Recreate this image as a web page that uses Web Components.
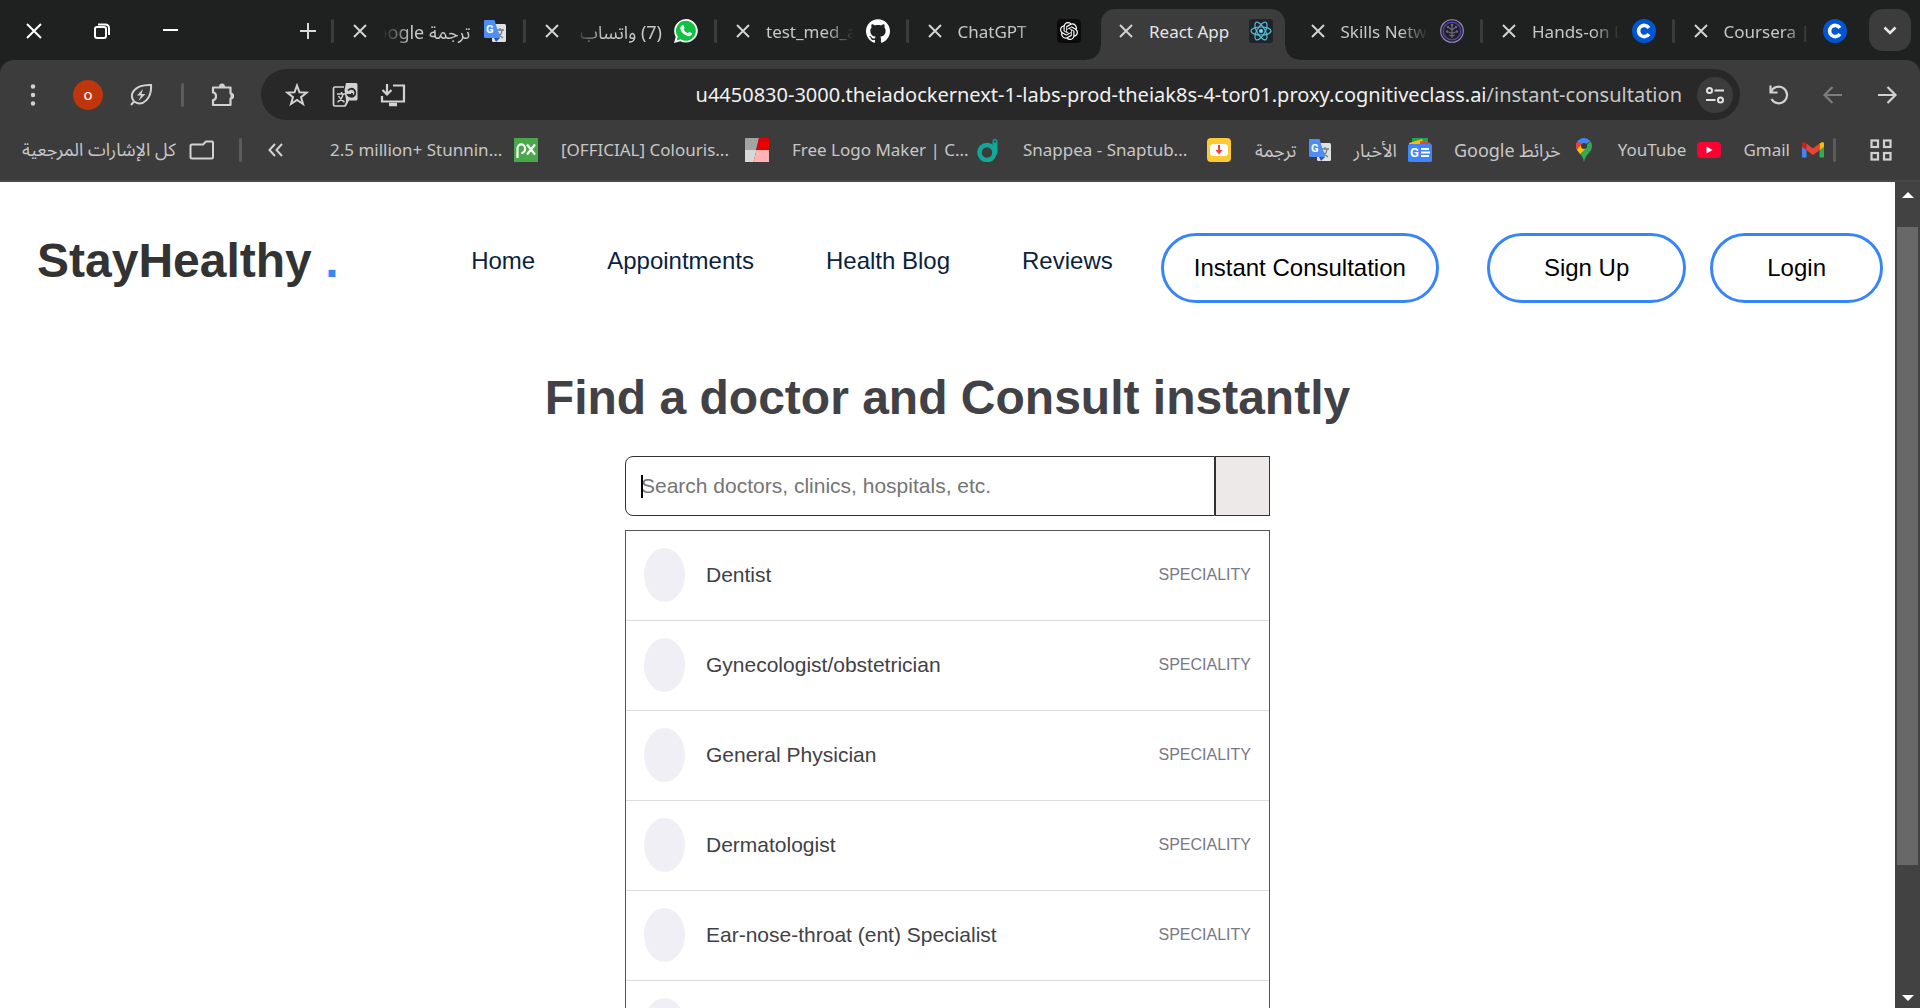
<!DOCTYPE html>
<html lang="en">
<head>
<meta charset="utf-8">
<title>React App</title>
<style>
  html, body { margin: 0; height: 100%; overflow: hidden; }
  body { font-family: "Liberation Sans", Arial, sans-serif; background: #fff; }
</style>
</head>
<body>
<browser-window></browser-window>
<script>
const UI_FONT = '"Noto Sans", "Open Sans", "Noto Sans Arabic", "DejaVu Sans", sans-serif';

const ICONS = {
  close: '<svg viewBox="0 0 20 20" width="20" height="20"><path d="M4 4L16 16M16 4L4 16" stroke="#d2d2d2" stroke-width="2" fill="none"/></svg>',
  winClose: '<svg viewBox="0 0 20 20" width="20" height="20"><path d="M3 3L17 17M17 3L3 17" stroke="#fff" stroke-width="2" fill="none"/></svg>',
  winRestore: '<svg viewBox="0 0 20 20" width="20" height="20" fill="none" stroke="#fff" stroke-width="2"><rect x="3" y="6" width="11" height="11" rx="2"/><path d="M6 3.500h7.500a3.500 3.500 0 0 1 3.500 3.500V14"/></svg>',
  winMin: '<svg viewBox="0 0 20 20" width="20" height="20"><path d="M3 9h15" stroke="#fff" stroke-width="2"/></svg>',
  plus: '<svg viewBox="0 0 20 20" width="20" height="20"><path d="M2 10H18M10 2V18" stroke="#dadada" stroke-width="2"/></svg>',
  chevron: '<svg viewBox="0 0 20 20" width="20" height="20"><path d="M4.500 7.500L10 13L15.500 7.500" stroke="#e6e6e6" stroke-width="2.600" fill="none"/></svg>',
  translate: '<svg viewBox="0 0 24 24" width="24" height="24"><rect x="9" y="5" width="14" height="18" rx="1.500" fill="#dfe1e3"/><path d="M13 11h8M17 9v2M14 19c3-1.500 4.500-4 5-8M14.500 13c1 2.500 3 4.500 5.500 6" stroke="#6d7f86" stroke-width="1.300" fill="none"/><path d="M1.500 1h10L17 19H2.500A1.500 1.500 0 0 1 1 17.500V2z" fill="#4f8ef5"/><path d="M11 19h6l-4 4z" fill="#2f55c5"/><text x="3" y="13.500" font-family="Roboto, sans-serif" font-weight="700" font-size="11" fill="#fff">G</text></svg>',
  whatsapp: '<svg viewBox="0 0 24 24" width="24" height="24"><path d="M12 0a12 11.800 0 1 1-5.700 22.300L0 24l1.700-6.100A12 12 0 0 1 12 0z" fill="#fff"/><path d="M12 1.800a10 10 0 1 1-5.400 18.500L2.700 21.400l1.100-3.800A10 10 0 0 1 12 1.800z" fill="#12c143"/><path d="M8.100 6.200c.6-.4 1.300-.3 1.600.4l.8 1.900c.2.500-.6 1.300-.9 1.700.9 1.900 2.300 3.200 4.300 4 .4-.4 1.100-1.400 1.600-1.200l2 1c.6.300.4 1.500-.1 2.100-1.200 1.400-3 1.300-5 .5-2.800-1.100-5.300-3.800-6-6.300-.4-1.600.4-3.200 1.700-4.100z" fill="#fff"/></svg>',
  github: '<svg viewBox="0 0 24 24" width="24" height="24"><path fill="#fff" d="M12 .297c-6.630 0-12 5.373-12 12 0 5.303 3.438 9.800 8.205 11.385.6.113.820-.258.820-.577 0-.285-.010-1.040-.015-2.040-3.338.724-4.042-1.610-4.042-1.610C4.422 18.070 3.633 17.700 3.633 17.700c-1.087-.744.084-.729.084-.729 1.205.084 1.838 1.236 1.838 1.236 1.070 1.835 2.809 1.305 3.495.998.108-.776.417-1.305.760-1.605-2.665-.3-5.466-1.332-5.466-5.930 0-1.310.465-2.380 1.235-3.220-.135-.303-.540-1.523.105-3.176 0 0 1.005-.322 3.300 1.230.960-.267 1.980-.399 3-.405 1.020.006 2.040.138 3 .405 2.280-1.552 3.285-1.230 3.285-1.230.645 1.653.240 2.873.120 3.176.765.840 1.230 1.910 1.230 3.220 0 4.610-2.805 5.625-5.475 5.920.420.360.810 1.096.810 2.220 0 1.606-.015 2.896-.015 3.286 0 .315.210.690.825.570C20.565 22.092 24 17.592 24 12.297c0-6.627-5.373-12-12-12"/></svg>',
  openai: '<svg viewBox="0 0 24 24" width="24" height="24"><rect width="24" height="24" rx="4" fill="#0b0b0b"/><g transform="translate(3 3) scale(.75)"><path fill="#fff" d="M22.2819 9.8211a5.9847 5.9847 0 0 0-.5157-4.9108 6.0462 6.0462 0 0 0-6.5098-2.9A6.0651 6.0651 0 0 0 4.9807 4.1818a5.9847 5.9847 0 0 0-3.9977 2.9 6.0462 6.0462 0 0 0 .7427 7.0966 5.98 5.98 0 0 0 .511 4.9107 6.051 6.051 0 0 0 6.5146 2.9001A5.9847 5.9847 0 0 0 13.2599 24a6.0557 6.0557 0 0 0 5.7718-4.2058 5.9894 5.9894 0 0 0 3.9977-2.9001 6.0557 6.0557 0 0 0-.7475-7.0729zm-9.022 12.6081a4.4755 4.4755 0 0 1-2.8764-1.0408l.1419-.0804 4.7783-2.7582a.7948.7948 0 0 0 .3927-.6813v-6.7369l2.02 1.1686a.071.071 0 0 1 .038.052v5.5826a4.504 4.504 0 0 1-4.4945 4.4944zm-9.6607-4.1254a4.4708 4.4708 0 0 1-.5346-3.0137l.142.0852 4.783 2.7582a.7712.7712 0 0 0 .7806 0l5.8428-3.3685v2.3324a.0804.0804 0 0 1-.0332.0615L9.74 19.9502a4.4992 4.4992 0 0 1-6.1408-1.6464zM2.3408 7.8956a4.485 4.485 0 0 1 2.3655-1.9728V11.6a.7664.7664 0 0 0 .3879.6765l5.8144 3.3543-2.0201 1.1685a.0757.0757 0 0 1-.071 0l-4.8303-2.7865A4.504 4.504 0 0 1 2.3408 7.872zm16.5963 3.8558L13.1038 8.364 15.1192 7.2a.0757.0757 0 0 1 .071 0l4.8303 2.7913a4.4944 4.4944 0 0 1-.6765 8.1042v-5.6772a.79.79 0 0 0-.407-.667zm2.0107-3.0231l-.142-.0852-4.7735-2.7818a.7759.7759 0 0 0-.7854 0L9.409 9.2297V6.8974a.0662.0662 0 0 1 .0284-.0615l4.8303-2.7866a4.4992 4.4992 0 0 1 6.6802 4.66zM8.3065 12.863l-2.02-1.1638a.0804.0804 0 0 1-.038-.0567V6.0742a4.4992 4.4992 0 0 1 7.3757-3.4537l-.142.0805L8.704 5.459a.7948.7948 0 0 0-.3927.6813zm1.0976-2.3654l2.602-1.4998 2.6069 1.4998v2.9994l-2.5974 1.4997-2.6067-1.4997Z"/></g></svg>',
  react: '<svg viewBox="0 0 24 24" width="24" height="24"><rect width="24" height="24" rx="3" fill="#20232a"/><g fill="none" stroke="#58bfd8" stroke-width="1.200"><ellipse cx="12" cy="12" rx="10" ry="4"/><ellipse cx="12" cy="12" rx="10" ry="4" transform="rotate(60 12 12)"/><ellipse cx="12" cy="12" rx="10" ry="4" transform="rotate(120 12 12)"/></g><circle cx="12" cy="12" r="2" fill="#61dafb"/></svg>',
  skills: '<svg viewBox="0 0 24 24" width="24" height="24" fill="none"><circle cx="12" cy="12" r="11.300" stroke="#9a8ec4" stroke-width="1.100"/><circle cx="12" cy="12" r="8.800" stroke="#5a3fb0" stroke-width="1.500"/><path d="M12 6v13M12 11L8 8M12 11l4-3M12 14.500l-5-2M12 14.500l5-2M12 17l-3-1M12 17l3-1" stroke="#6b6580" stroke-width="1.300"/><g fill="#6b6580"><circle cx="12" cy="6" r="1.300"/><circle cx="8" cy="8" r="1.200"/><circle cx="16" cy="8" r="1.200"/><circle cx="7" cy="12.500" r="1.200"/><circle cx="17" cy="12.500" r="1.200"/></g></svg>',
  coursera: '<svg viewBox="0 0 24 24" width="24" height="24"><circle cx="12" cy="12" r="12" fill="#0056d2"/><path d="M16.900 9A5.600 5.600 0 1 0 16.900 15" fill="none" stroke="#fff" stroke-width="3.600"/></svg>',
  dots: '<svg viewBox="0 0 24 24" width="24" height="24" fill="#d2d2d2"><circle cx="12" cy="3.500" r="2.200"/><circle cx="12" cy="12" r="2.200"/><circle cx="12" cy="20.500" r="2.200"/></svg>',
  leaf: '<svg viewBox="0 0 24 24" width="24" height="24" fill="none" stroke="#d2d2d2" stroke-width="2"><path d="M2 22L5 18.500C0 12 4 1.500 22 2C23 15 14 24.500 5 18.500"/><path d="M14 6L8 12.500H12L9.500 18L16.500 11H12.500z" fill="#d2d2d2" stroke="none"/></svg>',
  puzzle: '<svg viewBox="0 0 26 26" width="26" height="26"><path d="M3 5.500h17.500v6a2.500 2.500 0 0 1 0 5V23H3v-5c4 0 4-7.500 0-7.500z" fill="none" stroke="#d2d2d2" stroke-width="2.200" stroke-linejoin="round"/><path d="M9 5a3 3.400 0 0 1 6 0zM20.500 11a3 3 0 0 1 0 6z" fill="#d2d2d2"/></svg>',
  star: '<svg viewBox="0 0 24 24" width="24" height="24"><path d="M12 2.500L14.500 9.300L21.700 9.600L16 14.100L18 21L12 17L6 21L8 14.100L2.300 9.600L9.500 9.300z" fill="none" stroke="#d2d2d2" stroke-width="2"/></svg>',
  translateBar: '<svg viewBox="0 0 26 26" width="26" height="26"><path d="M12 5H3a1.500 1.500 0 0 0-1.500 1.500v16A1.500 1.500 0 0 0 3 24h10l2-4" fill="none" stroke="#d2d2d2" stroke-width="1.700"/><path d="M5 12h9M9.500 10v2M5.500 20c3.500-2 5-4.500 5.500-8M6.500 14c1.500 3 3.500 4.500 6 6" fill="none" stroke="#d2d2d2" stroke-width="1.500"/><path d="M14 1h10a1.500 1.500 0 0 1 1.500 1.500V17A1.500 1.500 0 0 1 24 18.500h-7L14 24v-5.500L12.500 8z" fill="#d2d2d2"/><path d="M16 8.500a4 4 0 1 1 0 4.500h4v-2" fill="none" stroke="#282828" stroke-width="1.800"/></svg>',
  install: '<svg viewBox="0 0 26 26" width="26" height="26" fill="none" stroke="#d2d2d2" stroke-width="2.200"><path d="M13 3.500h11v16H2V14"/><path d="M7 2v10M2.500 8L7 12.500L11.500 8"/><path d="M9 22.500h8" stroke-width="3.500"/></svg>',
  tune: '<svg viewBox="0 0 20 20" width="20" height="20" fill="none" stroke="#e3e3e3" stroke-width="2"><circle cx="4.500" cy="5.500" r="2.500"/><path d="M9.500 5.500H19M1 15h9.500"/><circle cx="15.500" cy="15" r="2.500"/></svg>',
  reload: '<svg viewBox="0 0 24 24" width="24" height="24" fill="none" stroke="#d2d2d2" stroke-width="2.200"><path d="M4 9A8.300 8.300 0 1 1 4.500 16"/><path d="M3.500 2.500V9.500H10.500"/></svg>',
  arrow: '<svg viewBox="0 0 24 24" width="24" height="24" fill="none" stroke="currentColor" stroke-width="2.200"><path d="M3 12H20M12.500 4L20.500 12L12.500 20"/></svg>',
  folder: '<svg viewBox="0 0 26 22" width="26" height="22"><path d="M3 5.500h11l3-3h6a1 1 0 0 1 1 1V18a1.500 1.500 0 0 1-1.500 1.500H3A1.500 1.500 0 0 1 1.500 18V7A1.500 1.500 0 0 1 3 5.500z" fill="none" stroke="#d2d2d2" stroke-width="2"/></svg>',
  more: '<svg viewBox="0 0 20 20" width="20" height="20"><path d="M9 4L3.500 10L9 16M16 4L10.500 10L16 16" fill="none" stroke="#d2d2d2" stroke-width="2"/></svg>',
  px: '<svg viewBox="0 0 24 24" width="24" height="24"><rect width="24" height="24" fill="#49a849"/><g fill="none" stroke="#fff" stroke-width="2.200"><path d="M3.500 20V10.500a3.800 4.300 0 1 1 3.800 4.500"/><path d="M13 6.500L21 16.500M21 6.500L13 16.500"/></g></svg>',
  colour: '<svg viewBox="0 0 24 24" width="24" height="24"><path d="M0 0h14l-3 12H0z" fill="#a3a3a3"/><path d="M14 0h10v12H11.500z" fill="#e60000"/><path d="M0 12h11.500L8.500 24H0z" fill="#d8d8d8"/><path d="M11.500 12H24v12H8.500z" fill="#ffb3b3"/></svg>',
  designevo: '<svg viewBox="0 0 24 24" width="24" height="24" fill="none"><circle cx="11" cy="14.500" r="7.500" stroke="#12a79b" stroke-width="4.500"/><path d="M19 3.500v11" stroke="#12a79b" stroke-width="5" stroke-linecap="round"/><circle cx="19" cy="3.500" r="1.300" fill="#0b5f59"/></svg>',
  snaptube: '<svg viewBox="0 0 24 24" width="24" height="24"><rect width="24" height="24" rx="4" fill="#ffc933"/><rect x="3" y="6" width="18" height="12" rx="3.500" fill="#fff"/><path d="M12 7v6" stroke="#f0403a" stroke-width="2"/><path d="M8.500 12h7L12 16.500z" fill="#f0403a"/></svg>',
  news: '<svg viewBox="0 0 24 24" width="24" height="24"><path d="M4 0h16v8H4z" fill="#23a455"/><path d="M1 5l13-4 2 7H2z" fill="#fbbc04"/><path d="M12 3l11 2-2 5h-9z" fill="#ea4335"/><rect y="6" width="24" height="18" rx="1.500" fill="#4285f4"/><text x="2" y="19" font-family="Roboto, sans-serif" font-weight="700" font-size="13" fill="#fff">G</text><path d="M13 11h8M13 14.500h9M13 18h8" stroke="#fff" stroke-width="1.800"/></svg>',
  maps: '<svg viewBox="0 0 24 24" width="24" height="24"><path d="M12 0a8 8 0 0 1 6.200 3L5.800 13C4.500 11 4 9.800 4 8a8 8 0 0 1 8-8z" fill="#4285f4"/><path d="M5.800 2.900L10 6.500L5.600 12.800C4.600 11.200 4 9.800 4 8c0-2 .7-3.800 1.800-5.100z" fill="#ea4335"/><path d="M18.300 3.200C19.400 4.600 20 6.200 20 8c0 7-6.500 7.500-8 16-.8-4.500-2.800-6.900-4.600-9z" fill="#34a853"/><path d="M14.500 9.800L8.200 16C7 14.600 5.800 13.300 5 11.700L10 6z" fill="#fbbc04"/><circle cx="12" cy="8" r="3" fill="#3c3c3c"/></svg>',
  youtube: '<svg viewBox="0 0 24 24" width="24" height="24"><rect y="4" width="24" height="16" rx="4" fill="#ff0033"/><path d="M9.500 8.500L15.500 12L9.500 15.500z" fill="#fff"/></svg>',
  gmail: '<svg viewBox="0 0 24 24" width="24" height="24"><path d="M1 6v13.500h4.500V10z" fill="#4285f4"/><path d="M23 6v13.500h-4.500V10z" fill="#34a853"/><path d="M18.500 5.500L21 4.200c1-.4 2 .5 2 1.500v3l-4.500 3.500z" fill="#fbbc04"/><path d="M5.500 5.500L3 4.200c-1-.4-2 .5-2 1.500v3l4.500 3.500z" fill="#c5221f"/><path d="M5.500 5.500L12 10.500l6.500-5v6.700L12 17l-6.500-4.800z" fill="#ea4335"/></svg>',
  grid: '<svg viewBox="0 0 24 24" width="24" height="24" fill="none" stroke="#d2d2d2" stroke-width="2.200"><rect x="2.500" y="2.500" width="6.500" height="6.500"/><rect x="15" y="2.500" width="6.500" height="6.500"/><rect x="2.500" y="15" width="6.500" height="6.500"/><rect x="15" y="15" width="6.500" height="6.500"/></svg>',
};

const BASE = `
  :host, * { box-sizing: border-box; }
  button { font: inherit; color: inherit; border: 0; background: none; padding: 0; margin: 0; cursor: pointer; }
  a { color: inherit; text-decoration: none; }
  svg { display: block; flex: none; }
  [dir=rtl] { font-size: 18px; }
`;

function define(name, render) {
  customElements.define(name, class extends HTMLElement {
    connectedCallback() {
      if (this.shadowRoot) return;
      const root = this.attachShadow({ mode: 'open' });
      const t = document.createElement('template');
      t.innerHTML = render(this);
      root.append(t.content.cloneNode(true));
    }
  });
}

define('ui-icon', el => `
  <style>:host { display: block; flex: none; } svg { display: block; }</style>
  ${ICONS[el.getAttribute('name')]}`);

define('browser-tab', el => `
  <style>${BASE}
    :host { display: flex; flex: 1; min-width: 0; height: 51px; align-items: center; color: #c7c7c7; font-size: 17px; }
    .sep { width: 3px; height: 24px; border-radius: 2px; background: #3c3c3c; margin: 0 16px 8px 0; }
    :host([plain]) .sep, :host([active]) .sep { background: none; }
    button, .favicon { margin-bottom: 8px; }
    .title { flex: 1; min-width: 0; margin: 0 12px 6px 13px; line-height: 28px; overflow: hidden; white-space: nowrap;
      -webkit-mask-image: linear-gradient(to right, #000 68%, transparent 100%); mask-image: linear-gradient(to right, #000 68%, transparent 100%); }
    .title[dir=rtl] { -webkit-mask-image: linear-gradient(to left, #000 68%, transparent 100%); mask-image: linear-gradient(to left, #000 68%, transparent 100%); }
    :host([active]) .title { -webkit-mask-image: none; mask-image: none; }
    .favicon { margin-right: 16px; }
    :host([active]) { color: #e6e6e6; position: relative; z-index: 0; }
    :host([active]) .shape { position: absolute; z-index: -1; inset: 0 4px; background: #3c3c3c; border-radius: 14px 14px 0 0; }
    .shape::before, .shape::after { content: ""; position: absolute; bottom: 0; width: 14px; height: 14px; }
    :host([active]) .shape::before { right: 100%; background: radial-gradient(circle at 0 0, transparent 13px, #3c3c3c 14px); }
    :host([active]) .shape::after { left: 100%; background: radial-gradient(circle at 100% 0, transparent 13px, #3c3c3c 14px); }
  </style>
  <span class="shape"></span><span class="sep"></span>
  <button aria-label="Close tab"><ui-icon name="close"></ui-icon></button>
  <span class="title" dir="${el.hasAttribute('rtl') ? 'rtl' : 'ltr'}"><slot></slot></span>
  <ui-icon class="favicon" name="${el.getAttribute('icon')}"></ui-icon>`);

define('tab-strip', () => `
  <style>${BASE}
    :host { display: flex; height: 60px; padding-top: 9px; background: #1f2120; }
    .window { display: flex; width: 331px; height: 43px; align-items: center; }
    .window button { width: 68px; height: 43px; display: grid; place-items: center; }
    .window .add { width: 36px; margin: 0 5px 0 auto; }
    .tabs { display: flex; flex: 1; min-width: 0; }
    .search { width: 42px; height: 42px; margin: 0 9px 0 6px; border-radius: 14px; background: #3c3c3c; display: grid; place-items: center; }
  </style>
  <div class="window">
    <button aria-label="Close"><ui-icon name="winClose"></ui-icon></button>
    <button aria-label="Restore"><ui-icon name="winRestore"></ui-icon></button>
    <button aria-label="Minimise"><ui-icon name="winMin"></ui-icon></button>
    <button class="add" aria-label="New tab"><ui-icon name="plus"></ui-icon></button>
  </div>
  <div class="tabs">
    <browser-tab icon="translate" rtl>ترجمة Google</browser-tab>
    <browser-tab icon="whatsapp" rtl>(7) واتساب</browser-tab>
    <browser-tab icon="github">test_med_a</browser-tab>
    <browser-tab icon="openai">ChatGPT</browser-tab>
    <browser-tab icon="react" active>React App</browser-tab>
    <browser-tab icon="skills" plain>Skills Netw</browser-tab>
    <browser-tab icon="coursera">Hands-on L</browser-tab>
    <browser-tab icon="coursera">Coursera |</browser-tab>
  </div>
  <button class="search" aria-label="Search tabs"><ui-icon name="chevron"></ui-icon></button>`);

define('tool-bar', () => `
  <style>${BASE}
    :host { display: flex; height: 60px; padding: 9px 6px 0 0; background: #3c3c3c; border-radius: 14px 14px 0 0; }
    .left { display: grid; grid-template-columns: 66px 44px 62px 20px 62px; width: 261px; height: 51px; }
    .left > *, .cells > * { display: grid; place-items: center; }
    .avatar span { width: 30px; height: 30px; border-radius: 50%; background: #bf360c; color: #fff; font-size: 15px; line-height: 28px; text-align: center; }
    .sep i { width: 3px; height: 24px; background: #5c5c5c; border-radius: 2px; }
    .url { flex: 1; min-width: 0; display: flex; align-items: center; height: 51px; border-radius: 26px; background: #282828; padding: 0 7px 0 12px; margin-right: 12px; }
    .cells { display: grid; grid-auto-flow: column; grid-auto-columns: 48px; height: 51px; }
    .address { flex: 1; min-width: 0; text-align: right; color: #c7c7c7; font-size: 20px; line-height: 28px; white-space: nowrap; margin-right: 15px; outline: 0; }
    .address b { font-weight: 400; color: #f1f1f1; }
    .site { width: 36px; height: 36px; border-radius: 50%; background: #3c3c3c; display: grid; place-items: center; }
    .nav { grid-auto-columns: 54px; color: #d2d2d2; }
    .nav .back { color: #7d7d7d; transform: scaleX(-1); }
  </style>
  <div class="left">
    <button aria-label="Menu"><ui-icon name="dots"></ui-icon></button>
    <button class="avatar" aria-label="Profile"><span>o</span></button>
    <button aria-label="Energy saver"><ui-icon name="leaf"></ui-icon></button>
    <span class="sep"><i></i></span>
    <button aria-label="Extensions"><ui-icon name="puzzle"></ui-icon></button>
  </div>
  <div class="url">
    <div class="cells">
      <button aria-label="Bookmark"><ui-icon name="star"></ui-icon></button>
      <button aria-label="Translate"><ui-icon name="translateBar"></ui-icon></button>
      <button aria-label="Install"><ui-icon name="install"></ui-icon></button>
    </div>
    <div class="address" role="textbox" contenteditable="true" spellcheck="false" aria-label="Address"><b>u4450830-3000.theiadockernext-1-labs-prod-theiak8s-4-tor01.proxy.cognitiveclass.ai</b>/instant-consultation</div>
    <button class="site" aria-label="Site information"><ui-icon name="tune"></ui-icon></button>
  </div>
  <div class="cells nav">
    <button aria-label="Reload"><ui-icon name="reload"></ui-icon></button>
    <button class="back" aria-label="Forward"><ui-icon name="arrow"></ui-icon></button>
    <button aria-label="Back"><ui-icon name="arrow"></ui-icon></button>
  </div>`);

define('bookmark-item', el => `
  <style>${BASE}
    :host { display: block; flex: none; }
    a { display: flex; align-items: center; gap: 11px; white-space: nowrap; }
    :host([long]) span { width: 173px; }
    span { line-height: 28px; }
  </style>
  <a href="#"><span dir="${el.hasAttribute('rtl') ? 'rtl' : 'ltr'}"><slot></slot></span><ui-icon name="${el.getAttribute('icon')}"></ui-icon></a>`);

define('bookmarks-bar', () => `
  <style>${BASE}
    :host { display: flex; align-items: center; justify-content: space-between; height: 62px; padding: 0 27px 0 22px; background: #3c3c3c; border-bottom: 2px solid #474747; color: #c7c7c7; font-size: 17px; }
    div { display: flex; align-items: center; }
    .all { display: flex; align-items: center; gap: 13px; white-space: nowrap; }
    i { width: 3px; height: 24px; border-radius: 2px; background: #5c5c5c; }
    .left { gap: 24px; }
    .items { gap: 22px; }
    .long { display: flex; gap: 23px; margin-right: 2px; }
    .tail { gap: 33px; margin-left: -14px; }
  </style>
  <div class="left">
    <button class="all"><span dir="rtl">كل الإشارات المرجعية</span><ui-icon name="folder"></ui-icon></button>
    <i></i>
    <button aria-label="More bookmarks"><ui-icon name="more"></ui-icon></button>
  </div>
  <div class="items">
    <div class="long">
      <bookmark-item long icon="px">2.5 million+ Stunnin...</bookmark-item>
      <bookmark-item long icon="colour">[OFFICIAL] Colouris...</bookmark-item>
      <bookmark-item long icon="designevo">Free Logo Maker | C...</bookmark-item>
      <bookmark-item long icon="snaptube">Snappea - Snaptub...</bookmark-item>
    </div>
    <bookmark-item rtl icon="translate">ترجمة</bookmark-item>
    <bookmark-item rtl icon="news">الأخبار</bookmark-item>
    <bookmark-item rtl icon="maps">خرائط Google</bookmark-item>
    <bookmark-item icon="youtube">YouTube</bookmark-item>
    <bookmark-item icon="gmail">Gmail</bookmark-item>
    <div class="tail"><i></i><button aria-label="Tab groups"><ui-icon name="grid"></ui-icon></button></div>
  </div>`);

define('pill-button', () => `
  <style>${BASE}
    :host { display: block; --pad: 54px; }
    :host([compact]) { --pad: 30px; }
    button { height: 70px; padding: 0 var(--pad); border: 3px solid #3685fb; border-radius: 35px; background: #fff; color: #000; font-size: 24px; line-height: 28px; white-space: nowrap; }
  </style>
  <button><slot></slot></button>`);

define('site-nav', () => `
  <style>${BASE}
    :host { display: flex; align-items: flex-start; justify-content: space-between; padding: 51px 12px 0 37px; }
    .logo { font-size: 48px; line-height: 56px; font-weight: 700; color: #333; white-space: nowrap; }
    .logo span { color: #3685fb; }
    nav { display: flex; align-items: flex-start; gap: 48px; }
    .links { display: flex; gap: 72px; padding-top: 14px; font-size: 24px; line-height: 28px; color: #0b1f3f; white-space: nowrap; }
    .account { display: flex; gap: 24px; }
  </style>
  <a class="logo" href="#">StayHealthy <span>.</span></a>
  <nav>
    <div class="links"><a href="#">Home</a><a href="#">Appointments</a><a href="#">Health Blog</a><a href="#">Reviews</a></div>
    <pill-button compact>Instant Consultation</pill-button>
    <div class="account"><pill-button>Sign Up</pill-button><pill-button>Login</pill-button></div>
  </nav>`);

define('speciality-row', el => `
  <style>${BASE}
    :host { display: flex; align-items: center; padding: 17px 18px 18px; border-bottom: 1px solid #dcdcdc; }
    i { width: 41px; height: 54px; border-radius: 50%; background: #f0eff5; }
    .name { flex: 1; margin-left: 21px; font-size: 21px; line-height: 24px; color: #414146; }
    .kind { font-size: 16px; line-height: 24px; color: #787887; }
  </style>
  <i></i><span class="name"><slot></slot></span><span class="kind">${el.getAttribute('kind') || ''}</span>`);

define('doctor-search', () => `
  <style>${BASE}
    :host { display: flex; flex-direction: column; align-items: center; padding-top: 67px; }
    h1 { margin: 0 0 30px; font-size: 48px; line-height: 56px; color: #414146; }
    .panel { width: 645px; }
    form { display: flex; height: 60px; margin-bottom: 14px; }
    .field { position: relative; flex: 1; display: flex; }
    input { flex: 1; min-width: 0; font: 21px/24px "Liberation Sans", Arial, sans-serif; padding: 0 15px; border: 1px solid #333; border-radius: 8px 0 0 8px; outline: 0; background: #fff; color: #414146; }
    input::placeholder { color: #757575; opacity: 1; }
    .caret { position: absolute; left: 16px; top: 19px; width: 2px; height: 23px; background: #000; }
    form button { width: 55px; border: 1px solid #333; background: #ede9e8; }
    .list { border: 1px solid #555; }
  </style>
  <h1>Find a doctor and Consult instantly</h1>
  <div class="panel">
    <form>
      <div class="field"><input type="text" aria-label="Search doctors" placeholder="Search doctors, clinics, hospitals, etc."><span class="caret"></span></div>
      <button type="button" aria-label="Search"></button>
    </form>
    <div class="list">
      <speciality-row kind="SPECIALITY">Dentist</speciality-row>
      <speciality-row kind="SPECIALITY">Gynecologist/obstetrician</speciality-row>
      <speciality-row kind="SPECIALITY">General Physician</speciality-row>
      <speciality-row kind="SPECIALITY">Dermatologist</speciality-row>
      <speciality-row kind="SPECIALITY">Ear-nose-throat (ent) Specialist</speciality-row>
      <speciality-row></speciality-row>
    </div>
  </div>`);

define('scroll-bar', () => `
  <style>
    :host { display: flex; flex-direction: column; width: 25px; padding: 10px 2px 7px; background: #424242; box-sizing: border-box; align-items: center; }
    svg { display: block; flex: none; }
    .track { flex: 1; align-self: stretch; display: flex; flex-direction: column; margin: 29px 0 20px; }
    .thumb { flex: 643; background: #686868; }
    .rest { flex: 111; }
  </style>
  <svg width="12" height="6" viewBox="0 0 12 6"><path d="M0 6L6 0L12 6z" fill="#fff"/></svg>
  <div class="track"><div class="thumb"></div><div class="rest"></div></div>
  <svg width="12" height="6" viewBox="0 0 12 6"><path d="M0 0L6 6L12 0z" fill="#fff"/></svg>`);

define('browser-window', () => `
  <style>
    :host { display: flex; flex-direction: column; height: 100vh; overflow: hidden; }
    header { background: #1f2120; font-family: ${UI_FONT}; flex: none; }
    .view { flex: 1; min-height: 0; display: flex; }
    main { flex: 1; min-width: 0; overflow: hidden; background: #fff; }
  </style>
  <header><tab-strip></tab-strip><tool-bar></tool-bar><bookmarks-bar></bookmarks-bar></header>
  <div class="view">
    <main><site-nav></site-nav><doctor-search></doctor-search></main>
    <scroll-bar></scroll-bar>
  </div>`);
</script>
</body>
</html>
